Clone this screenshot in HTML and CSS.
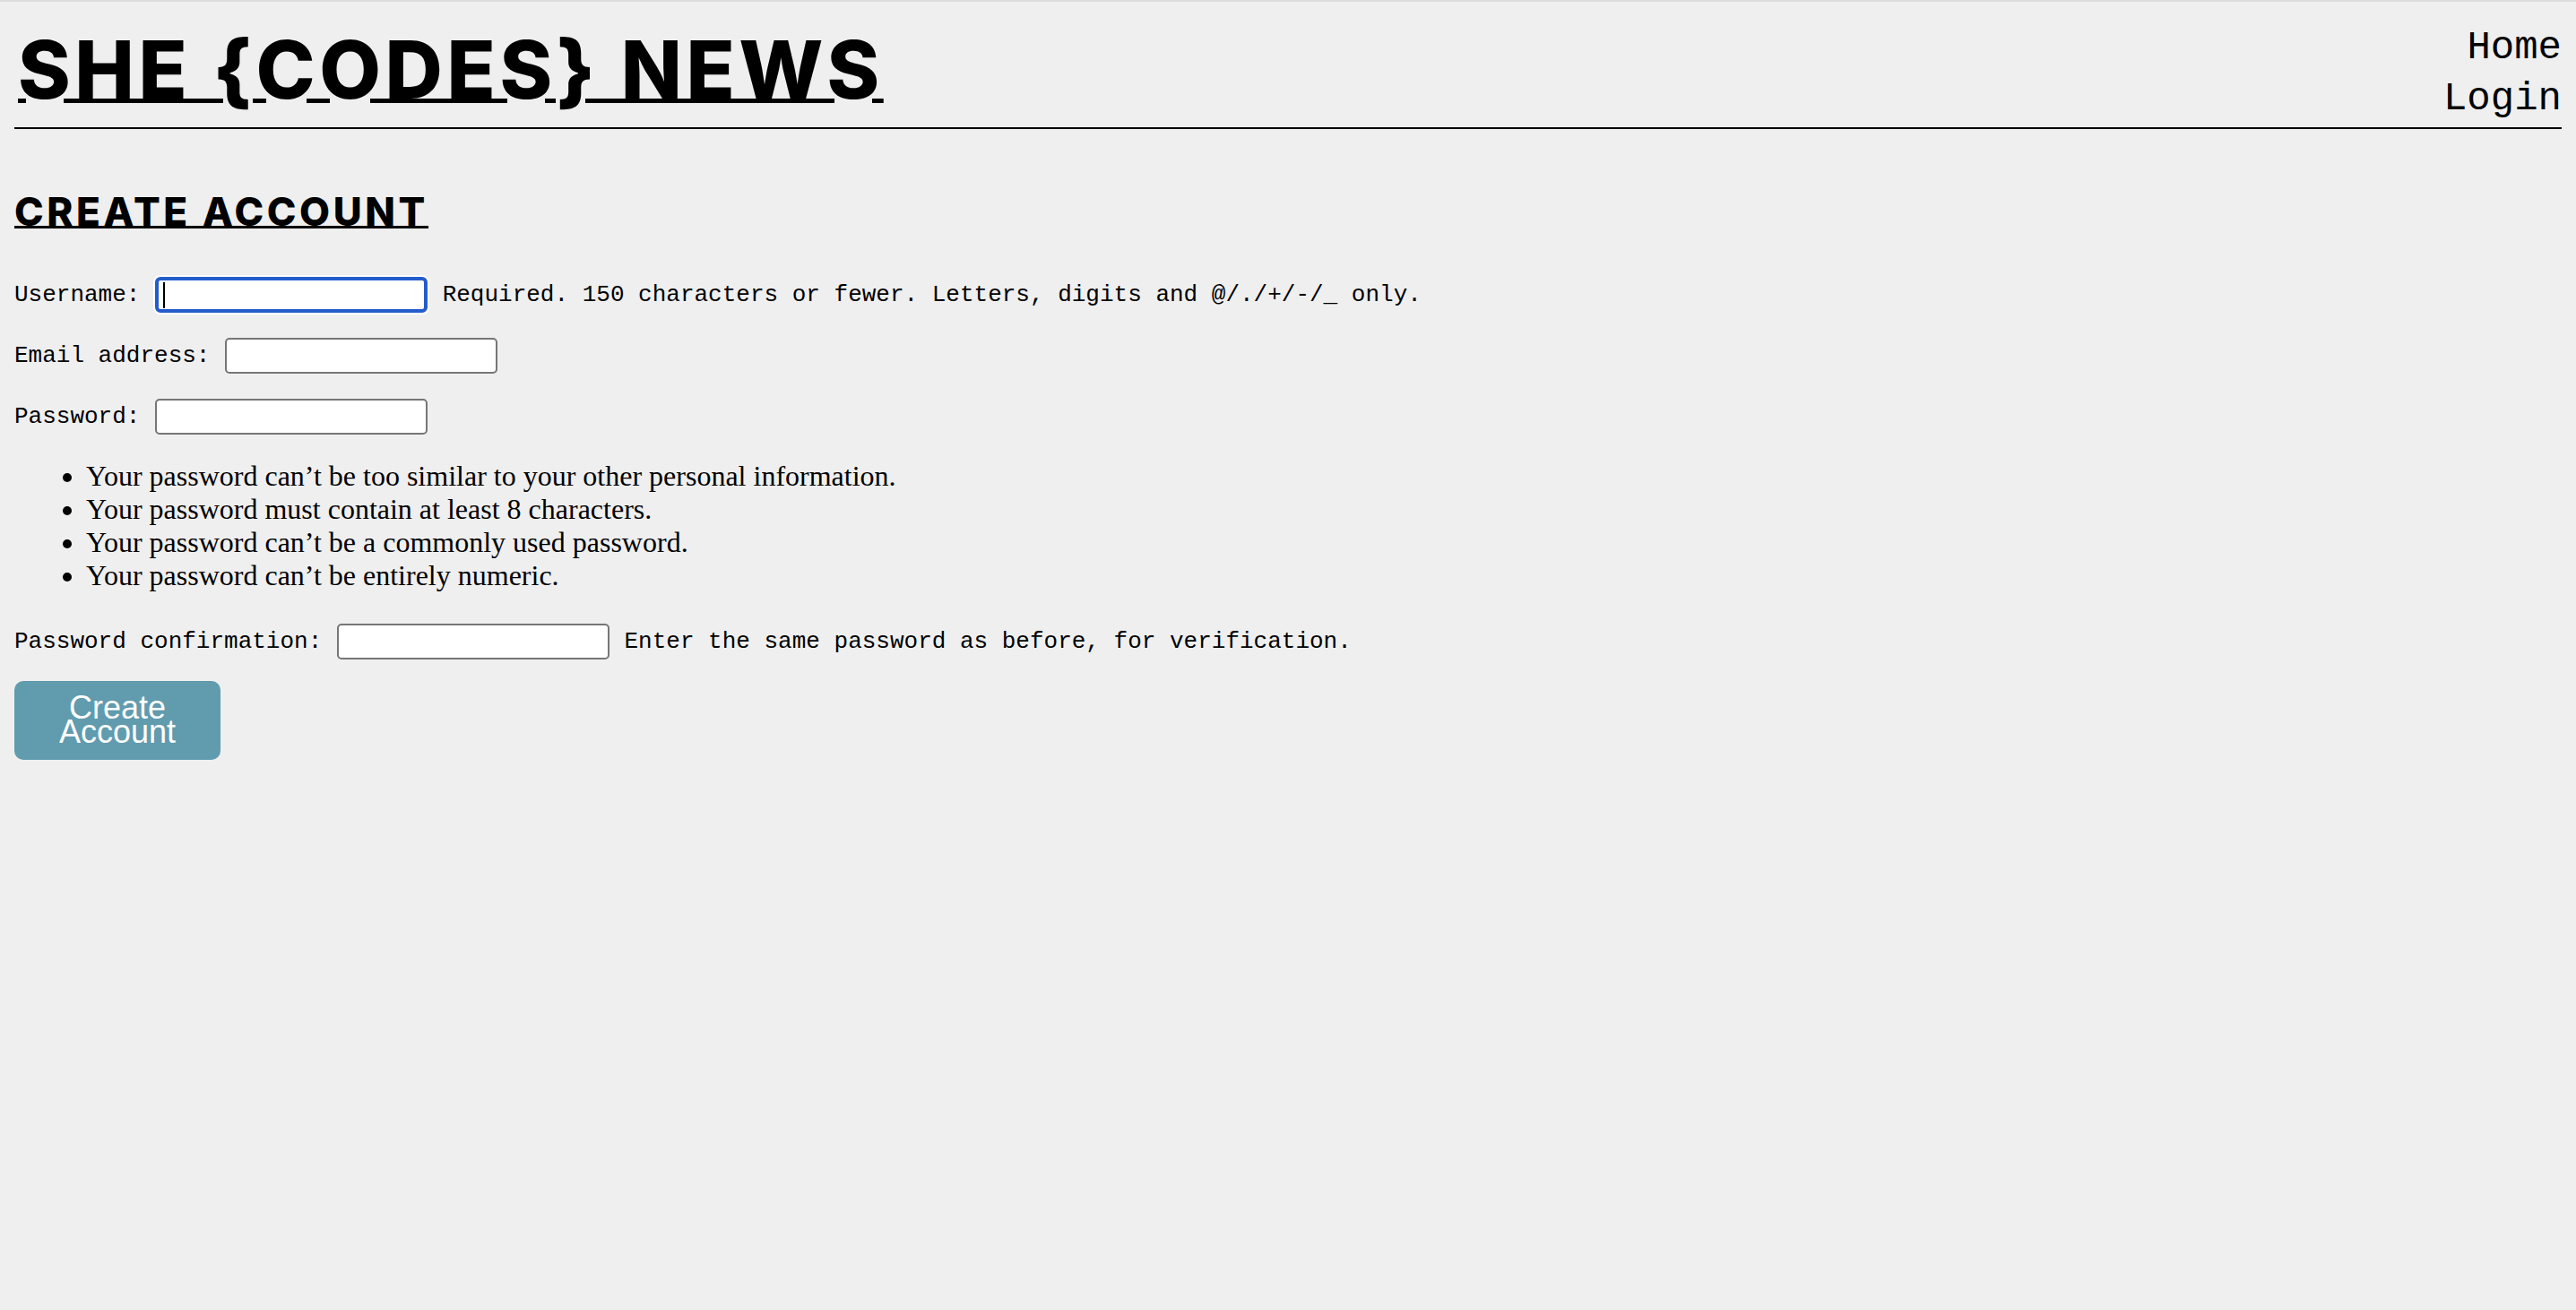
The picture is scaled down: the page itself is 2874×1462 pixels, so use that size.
FILE: index.html
```html
<!DOCTYPE html>
<html lang="en">
<head>
<meta charset="utf-8">
<title>She Codes News - Create Account</title>
<link rel="stylesheet" href="styles.css">
</head>
<body>
<header class="site-header">
  <h1 class="site-title">SHE {CODES} NEWS</h1>
  <nav class="site-nav">
    <a href="#" class="nav-link">Home</a>
    <a href="#" class="nav-link">Login</a>
  </nav>
</header>
<main class="content">
  <h2 class="page-title">CREATE ACCOUNT</h2>
  <form class="signup-form">
    <p class="form-row"><label for="id_username">Username:</label> <span class="field"><input type="text" id="id_username" class="text-input is-focused"><span class="caret"></span></span> <span class="helptext">Required. 150 characters or fewer. Letters, digits and @/./+/-/_ only.</span></p>
    <p class="form-row"><label for="id_email">Email address:</label> <input type="email" id="id_email" class="text-input"></p>
    <p class="form-row"><label for="id_password1">Password:</label> <input type="password" id="id_password1" class="text-input"></p>
    <ul class="pw-rules">
      <li>Your password can’t be too similar to your other personal information.</li>
      <li>Your password must contain at least 8 characters.</li>
      <li>Your password can’t be a commonly used password.</li>
      <li>Your password can’t be entirely numeric.</li>
    </ul>
    <p class="form-row"><label for="id_password2">Password confirmation:</label> <input type="password" id="id_password2" class="text-input"> <span class="helptext">Enter the same password as before, for verification.</span></p>
    <button type="button" class="submit-btn">Create Account</button>
  </form>
</main>
</body>
</html>
```

FILE: styles.css
```css
html {
  background: #efefef;
  border-top: 2px solid #dcdcdc;
}

body {
  margin: 0 16px;
  color: #000;
  font-family: "Liberation Serif", "Times New Roman", serif;
  font-size: 32px;
}

.site-header {
  display: flex;
  justify-content: space-between;
  align-items: flex-start;
  padding-bottom: 3px;
  border-bottom: 2px solid #000;
}

.site-title {
  margin: 31px 0 0 4px;
  font-family: Inter, "DejaVu Sans", sans-serif;
  font-weight: 800;
  font-size: 89px;
  line-height: 1;
  letter-spacing: 4.6px;
  text-decoration: underline;
  text-decoration-thickness: 5px;
  text-underline-offset: 0;
}

.site-nav {
  margin-top: 23px;
  display: flex;
  flex-direction: column;
  align-items: flex-end;
}

.nav-link {
  font-family: "Liberation Mono", "Courier New", monospace;
  font-size: 44px;
  line-height: 57px;
  color: #000;
  text-decoration: none;
}

.page-title {
  margin: 70px 0 51px;
  font-family: Inter, "DejaVu Sans", sans-serif;
  font-weight: 800;
  font-size: 44px;
  line-height: 1;
  letter-spacing: 3.6px;
  text-decoration: underline;
  text-decoration-thickness: 3px;
  text-underline-offset: 0;
}

.signup-form {
  font-family: "Liberation Mono", "Courier New", monospace;
  font-size: 26px;
}

.form-row {
  margin: 0 0 28px;
  white-space: nowrap;
}

.field {
  position: relative;
  display: inline-block;
  vertical-align: middle;
}

.text-input {
  box-sizing: border-box;
  width: 304px;
  height: 40px;
  margin: 0 1px;
  padding: 0 6px;
  vertical-align: middle;
  background: #fff;
  border: 2px solid #767676;
  border-radius: 5px;
  font: inherit;
  outline: none;
}

.text-input.is-focused {
  display: block;
  border: 4px solid #245ccc;
  border-radius: 6px;
  box-shadow: 0 0 0 2px #fff;
}

.caret {
  position: absolute;
  left: 10px;
  top: 6px;
  width: 2px;
  height: 29px;
  background: #000;
}

.pw-rules {
  margin: 5px 0 35px;
  padding-left: 80px;
  font-family: "Liberation Serif", "Times New Roman", serif;
  font-size: 32px;
  line-height: normal;
}

.submit-btn {
  display: block;
  box-sizing: border-box;
  width: 230px;
  height: 88px;
  margin-top: -4px;
  padding: 16px 10px 18px;
  background: #619bae;
  color: #fff;
  border: none;
  border-radius: 10px;
  font-family: "Liberation Sans", Arial, sans-serif;
  font-size: 36px;
  line-height: 27px;
  text-align: center;
}
```
